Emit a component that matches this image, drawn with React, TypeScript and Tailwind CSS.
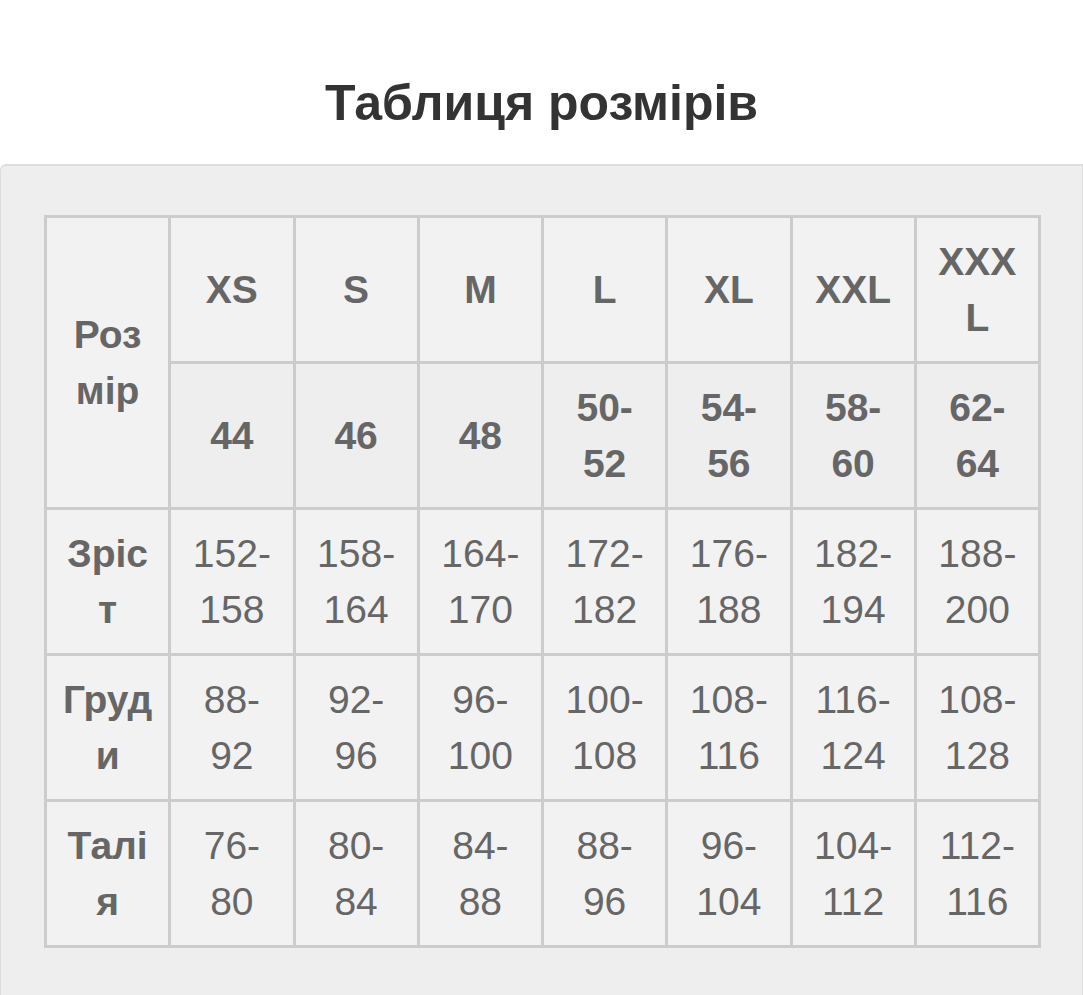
const sizes = ["XS", "S", "M", "L", "XL", "XXL", "XXXL"];
const ua = ["44", "46", "48", "50-52", "54-56", "58-60", "62-64"];

const rows = [
  { label: "Зріст", values: ["152-158", "158-164", "164-170", "172-182", "176-188", "182-194", "188-200"] },
  { label: "Груди", values: ["88-92", "92-96", "96-100", "100-108", "108-116", "116-124", "108-128"] },
  { label: "Талія", values: ["76-80", "80-84", "84-88", "88-96", "96-104", "104-112", "112-116"] },
];

const cell = "border-[3px] border-[#ccc] px-[13px] py-[15.5px] text-center align-middle break-words";

export default function App() {
  return (
    <div className="bg-white font-[family-name:Liberation_Sans,Arial,sans-serif]">
      <div className="pt-[74px] pb-[32px] text-center">
        <h1 className="text-[50px] leading-[58px] font-bold text-[#333]">Таблиця розмірів</h1>
      </div>

      <div className="bg-[#eee] border-t-2 border-x border-[#ddd] rounded-tl-md pl-[43px] pr-[40px] pt-[49px] pb-[50px]">
        <table className="w-[997px] table-fixed border-collapse text-[39px] leading-[56px] text-[#666]">
          <tbody>
            <tr className="bg-[#f2f2f2]">
              <td rowSpan={2} className={cell + " font-bold"}>Розмір</td>
              {sizes.map((s) => (
                <td key={s} className={cell + " font-bold"}>{s}</td>
              ))}
            </tr>
            <tr className="bg-[#eee]">
              {ua.map((s) => (
                <td key={s} className={cell + " font-bold"}>{s}</td>
              ))}
            </tr>
            {rows.map((r) => (
              <tr key={r.label} className="bg-[#f2f2f2]">
                <td className={cell + " font-bold"}>{r.label}</td>
                {r.values.map((v, i) => (
                  <td key={i} className={cell}>{v}</td>
                ))}
              </tr>
            ))}
          </tbody>
        </table>
      </div>
    </div>
  );
}
